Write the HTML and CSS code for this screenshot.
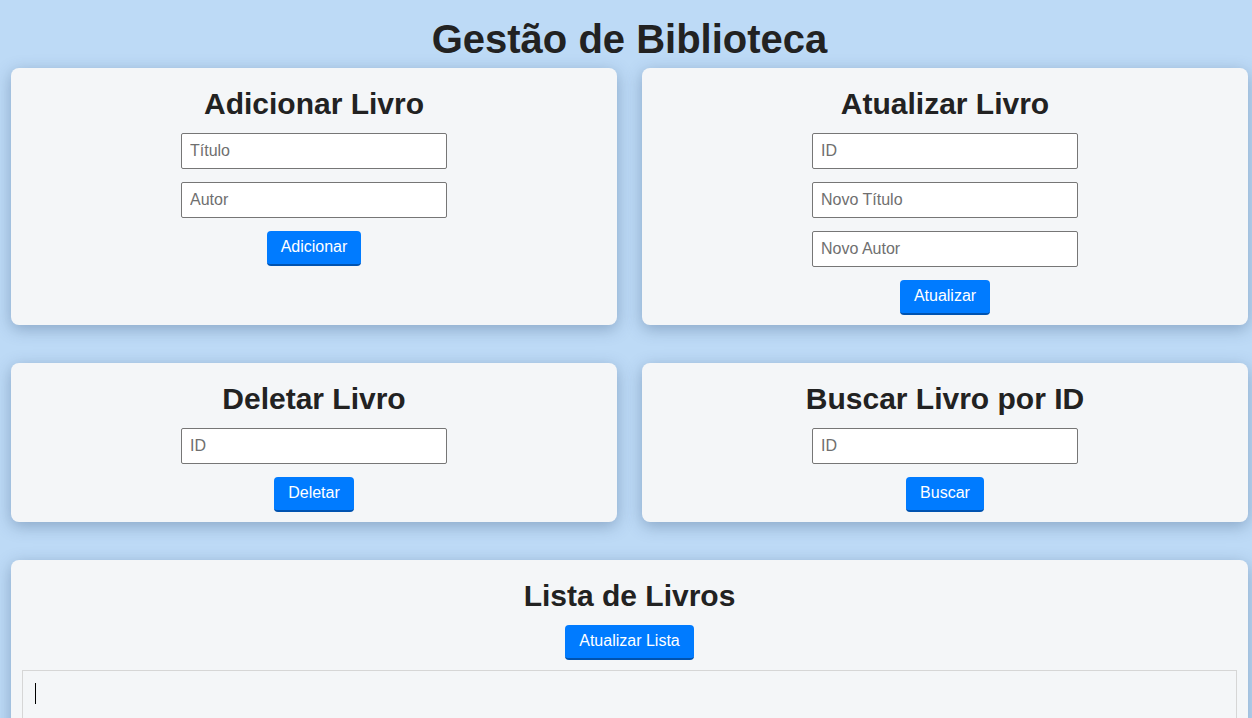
FILE: index.html
```html
<!DOCTYPE html>
<html lang="pt">
<head>
<meta charset="utf-8">
<title>Gestão de Biblioteca</title>
<link rel="stylesheet" href="styles.css">
</head>
<body>
<div class="page">
  <h1 class="title">Gestão de Biblioteca</h1>
  <div class="grid">
    <section class="card">
      <h2>Adicionar Livro</h2>
      <div class="form">
        <input class="field" type="text" placeholder="Título">
        <input class="field" type="text" placeholder="Autor">
        <button class="btn">Adicionar</button>
      </div>
    </section>
    <section class="card">
      <h2>Atualizar Livro</h2>
      <div class="form">
        <input class="field" type="text" placeholder="ID">
        <input class="field" type="text" placeholder="Novo Título">
        <input class="field" type="text" placeholder="Novo Autor">
        <button class="btn">Atualizar</button>
      </div>
    </section>
    <section class="card">
      <h2>Deletar Livro</h2>
      <div class="form">
        <input class="field" type="text" placeholder="ID">
        <button class="btn">Deletar</button>
      </div>
    </section>
    <section class="card">
      <h2>Buscar Livro por ID</h2>
      <div class="form">
        <input class="field" type="text" placeholder="ID">
        <button class="btn">Buscar</button>
      </div>
    </section>
    <section class="card wide">
      <h2>Lista de Livros</h2>
      <div class="form">
        <button class="btn">Atualizar Lista</button>
      </div>
      <div class="output"><span class="caret"></span></div>
    </section>
  </div>
</div>
</body>
</html>
```

FILE: styles.css
```css
html, body {
  margin: 0;
  padding: 0;
}
body {
  background: #bddaf6;
  font-family: "Liberation Sans", Arial, sans-serif;
  color: #222;
  overflow: hidden;
  height: 718px;
}
.page {
  padding: 0 4px 0 11px;
}
.title {
  margin: 0;
  padding-top: 16px;
  font-size: 40px;
  line-height: 46px;
  font-weight: bold;
  text-align: center;
  color: #222;
  height: 52px;
}
.grid {
  display: grid;
  grid-template-columns: 1fr 1fr;
  column-gap: 25px;
  row-gap: 38px;
}
.card {
  background: #f4f6f8;
  border-radius: 8px;
  box-shadow: 0 4px 16px rgba(40, 70, 110, 0.35);
  padding: 20px 20px 10px;
  text-align: center;
}
.card.wide {
  grid-column: 1 / span 2;
  padding: 20px 11px 10px;
}
.card h2 {
  margin: 0 0 13px;
  font-size: 30px;
  line-height: 32px;
  font-weight: bold;
  color: #222;
}
.form {
  display: flex;
  flex-direction: column;
  align-items: center;
  gap: 13px;
}
.field {
  width: 248px;
  height: 18px;
  padding: 8px;
  border: 1px solid #767676;
  border-radius: 2px;
  background: #fff;
  font-family: "Liberation Sans", Arial, sans-serif;
  font-size: 16px;
  color: #222;
  outline: none;
}
.field::placeholder {
  color: #6f6f6f;
}
.btn {
  background: #007bff;
  color: #fff;
  border: none;
  border-bottom: 2px solid #0053b0;
  border-radius: 4px;
  padding: 7px 14px 8px;
  font-family: "Liberation Sans", Arial, sans-serif;
  font-size: 16px;
  line-height: 18px;
  cursor: pointer;
}
.output {
  margin-top: 10px;
  border: 1px solid #d6d6d6;
  height: 120px;
  padding: 12px;
  text-align: left;
}
.caret {
  display: block;
  width: 1px;
  height: 21px;
  background: #000;
}
```
